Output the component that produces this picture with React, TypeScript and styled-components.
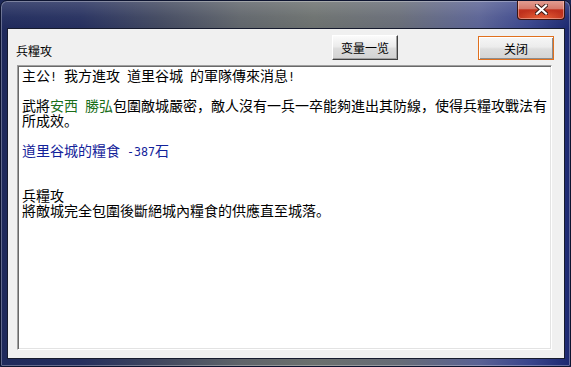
import React from "react";
import styled, { createGlobalStyle } from "styled-components";

const GlobalStyle = createGlobalStyle`
  html, body {
    margin: 0;
    padding: 0;
    overflow: hidden;
    background: #1d2858;
  }
  * {
    box-sizing: border-box;
  }
`;

const cjk = `"Noto Sans CJK SC", "Noto Sans CJK TC", sans-serif`;

const App = () => {
  return (
    <>
      <GlobalStyle />
      <WindowFrame>
        <TitleBar>
          <CloseButton aria-label="close">
            <svg width="13" height="11" viewBox="0 0 13 11">
              <path d="M2 1.5 L11 9.5 M11 1.5 L2 9.5" stroke="#3a1a16" strokeWidth="4" strokeLinecap="square" />
              <path d="M2 1.5 L11 9.5 M11 1.5 L2 9.5" stroke="#ffffff" strokeWidth="2.2" strokeLinecap="square" />
            </svg>
          </CloseButton>
        </TitleBar>
        <ClientArea>
          <Header>
            <Caption>兵糧攻</Caption>
            <ClassicButton>变量一览</ClassicButton>
            <DefaultButton>关闭</DefaultButton>
          </Header>
          <MessageBox>
            <Paragraph gap={1}>
              主公<Half>! </Half>我方進攻<Half> </Half>道里谷城<Half> </Half>的軍隊傳來消息<Half>!</Half>
            </Paragraph>
            <Paragraph gap={1}>
              武將<Colored tone="green">安西<Half> </Half>勝弘</Colored>包圍敵城嚴密，敵人沒有一兵一卒能夠進出其防線，使得兵糧攻戰法有
              <br />
              所成效。
            </Paragraph>
            <Paragraph gap={2}>
              <Colored tone="blue">
                道里谷城的糧食<Half> -387</Half>石
              </Colored>
            </Paragraph>
            <Paragraph gap={0}>
              兵糧攻
              <br />
              將敵城完全包圍後斷絕城內糧食的供應直至城落。
            </Paragraph>
          </MessageBox>
        </ClientArea>
      </WindowFrame>
    </>
  );
};

export default App;

const WindowFrame = styled.div`
  width: 571px;
  height: 367px;
  display: flex;
  flex-direction: column;
  padding: 0 5px 7px 6px;
  border: 1px solid #0d1430;
  border-radius: 7px 7px 2px 2px;
  overflow: hidden;
  font-family: ${cjk};
  background:
    linear-gradient(180deg, rgba(255, 255, 255, 0.16) 0px, rgba(255, 255, 255, 0.04) 16px, rgba(255, 255, 255, 0) 28px),
    linear-gradient(
      90deg,
      #1f2a5c 0%,
      #252f5e 14%,
      #41485f 28%,
      #5f646a 42%,
      #6b706e 55%,
      #676c77 70%,
      #5a6294 84%,
      #39458c 93%,
      #1c2870 100%
    );
  box-shadow: inset 0 0 0 1px rgba(255, 255, 255, 0.3);
`;

const TitleBar = styled.div`
  height: 27px;
  display: flex;
  justify-content: flex-end;
  align-items: flex-start;
`;

const CloseButton = styled.div`
  width: 48px;
  height: 20px;
  margin-top: -1px;
  display: flex;
  align-items: center;
  justify-content: center;
  border: 1px solid #3b1510;
  border-top: none;
  border-radius: 0 0 4px 4px;
  background:
    radial-gradient(ellipse 60% 50% at 50% 100%, rgba(255, 120, 70, 0.75), rgba(255, 120, 70, 0) 100%),
    linear-gradient(180deg, #e3a196 0%, #d67a6c 45%, #c1321e 52%, #b42a18 100%);
  box-shadow: inset 0 0 0 1px rgba(255, 220, 210, 0.45);
`;

const ClientArea = styled.div`
  flex: 1;
  display: flex;
  flex-direction: column;
  border: 1px solid #161b2e;
  background: #f0f0f0;
`;

const Header = styled.div`
  height: 36px;
  flex-shrink: 0;
  display: flex;
  align-items: flex-start;
  padding: 6px 10px 0 8px;
`;

const Caption = styled.span`
  margin-top: 8px;
  font-size: 12px;
  line-height: 16px;
  color: #000;
`;

const ClassicButton = styled.div`
  width: 66px;
  height: 25px;
  margin-left: auto;
  margin-right: 80px;
  display: flex;
  align-items: center;
  justify-content: center;
  font-size: 12px;
  color: #000;
  border: 1px solid;
  border-color: #ffffff #404040 #404040 #ffffff;
  background: linear-gradient(180deg, #fbfbfb 0%, #ececec 45%, #dcdcdc 55%, #d2d2d2 100%);
  box-shadow: inset -1px -1px 0 #a0a0a0;
`;

const DefaultButton = styled.div`
  width: 76px;
  height: 24px;
  margin-top: 1px;
  display: flex;
  align-items: center;
  justify-content: center;
  font-size: 12px;
  color: #000;
  border: 1px solid #e0701e;
  background: linear-gradient(180deg, #f6f6f6 0%, #ececec 45%, #dedede 55%, #d4d4d4 100%);
  box-shadow: inset 1px 1px 0 #ffffff, inset -1px -1px 0 #8c8c8c;
`;

const MessageBox = styled.div`
  flex: 1;
  margin: 0 12px 8px 9px;
  padding: 2px 0 0 4px;
  background: #ffffff;
  border: 1px solid;
  border-color: #a0a0a0 #ffffff #ffffff #a0a0a0;
  box-shadow: inset 1px 1px 0 #696969, inset -1px -1px 0 #e3e3e3;
  font-size: 14px;
  color: #000;
  overflow: hidden;
`;

/* gap = number of blank 15px rows that follow the paragraph */
const Paragraph = styled.div<{ gap: number }>`
  margin: 0 0 ${(props) => props.gap * 15}px;
  line-height: 15px;
  white-space: nowrap;
`;

const Half = styled.span`
  font-family: "DejaVu Sans Mono", monospace;
  font-size: 11.63px;
  line-height: 0;
  white-space: pre;
`;

const Colored = styled.span<{ tone: "green" | "blue" }>`
  color: ${(props) => (props.tone === "green" ? "#1a6e1a" : "#12229a")};
`;
